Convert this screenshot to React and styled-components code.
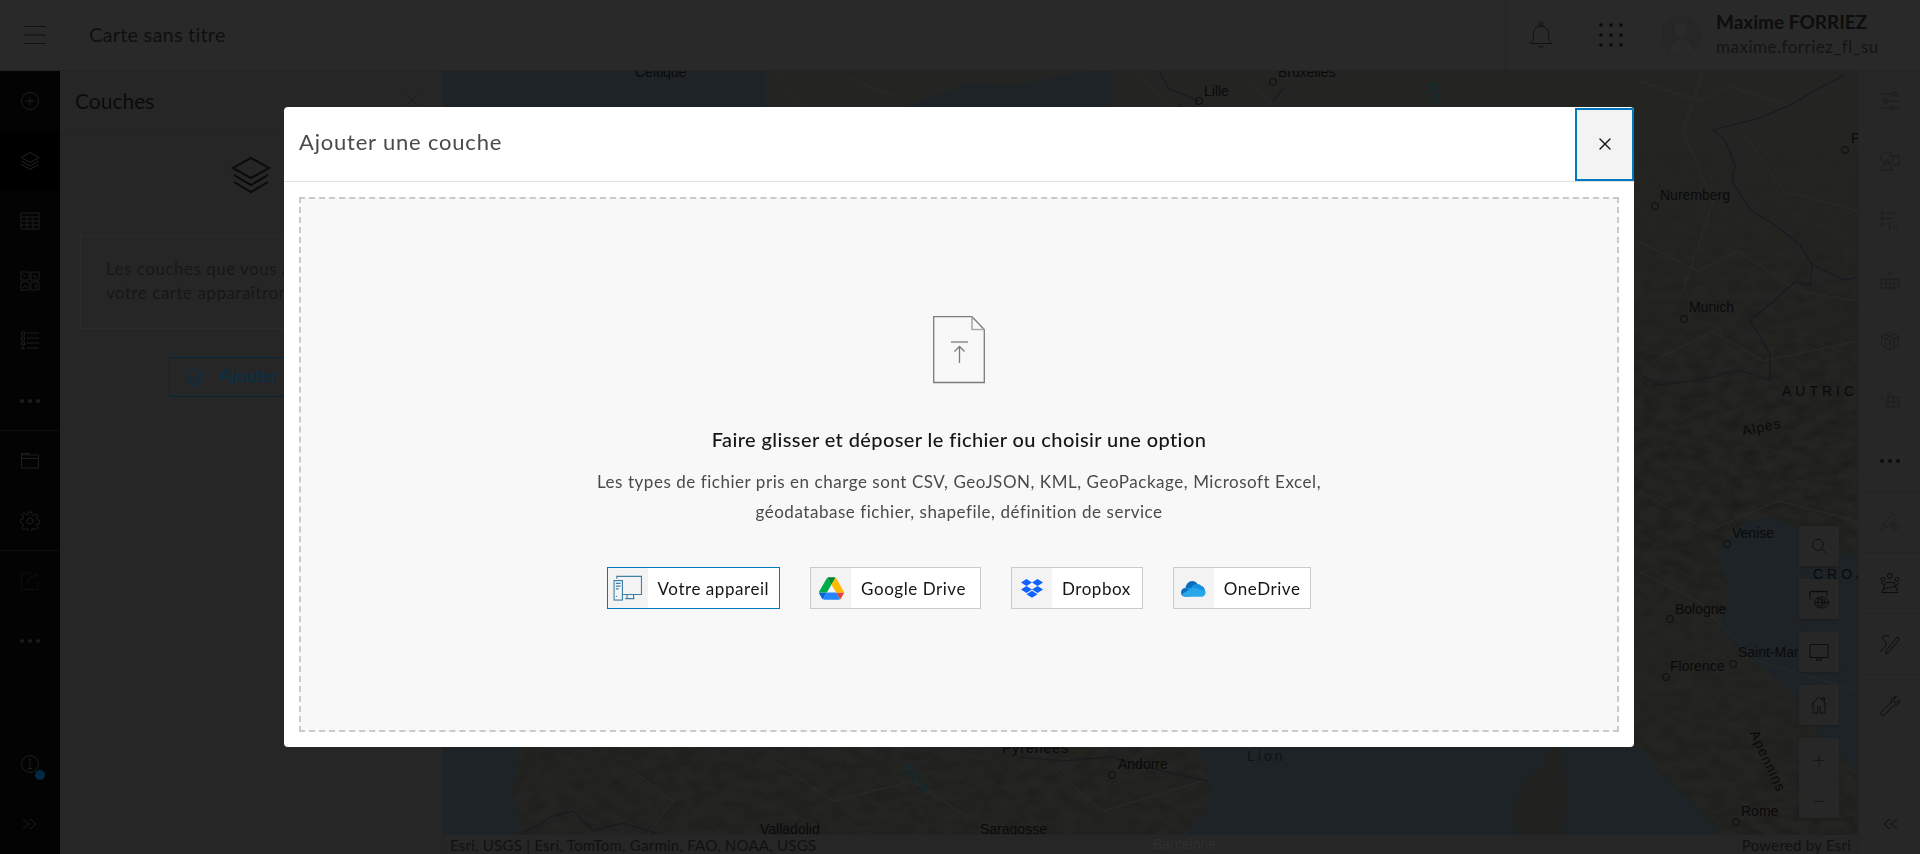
import React from "react";
import styled, { createGlobalStyle } from "styled-components";
import { X } from "lucide-react";

const FONT = `Lato, "Open Sans", "Liberation Sans", sans-serif`;

const GlobalStyle = createGlobalStyle`
  html, body, #root {
    margin: 0;
    height: 100%;
    background: #262626;
    font-family: ${FONT};
    overflow: hidden;
  }
  * { box-sizing: border-box; }
`;

/* ---------- icons ---------- */

const Svg = ({ size = 20, color = "#1e1e1e", sw = 1, children }) => (
  <svg width={size} height={size} viewBox="0 0 20 20" fill="none" stroke={color} strokeWidth={sw}>
    {children}
  </svg>
);

const LayersIcon = ({ size, color }) => (
  <Svg size={size} color={color}>
    <path d="M10 1.500 19 6.500 10 11.500 1 6.500Z" />
    <path d="M1.500 10 10 15 18.500 10" />
    <path d="M1.500 13.500 10 18.500 18.500 13.500" />
  </Svg>
);
const AddIcon = () => (
  <Svg>
    <circle cx="10" cy="10" r="8.500" />
    <path d="M10 5.500v9M5.500 10h9" />
  </Svg>
);
const TableIcon = () => (
  <Svg>
    <path d="M1 2h18v16H1zM1 6h18M1 10h18M1 14h18M7 6v12M13 6v12" />
  </Svg>
);
const GridIcon = () => (
  <Svg>
    <path d="M1 1h8v8H1zM11 1h8v8h-8zM1 11h8v8H1zM11 11h8v8h-8z" />
    <path d="M3 3l3 3M14 3v3h3M3 17l2-3 2 3M14 14h3v1h-1v3" />
  </Svg>
);
const ListIcon = () => (
  <Svg>
    <path d="M7 2h12M7 7h12M7 12h12M7 17h12" />
    <path d="M1.500 1h3v3h-3zM1.500 6h3v3h-3zM1.500 11h3v3h-3zM3 15.500 4.500 18h-3z" />
  </Svg>
);
const DotsIcon = ({ color = "#1e1e1e" }) => (
  <svg width="20" height="6" viewBox="0 0 20 6" fill={color}>
    <circle cx="2" cy="3" r="2" />
    <circle cx="10" cy="3" r="2" />
    <circle cx="18" cy="3" r="2" />
  </svg>
);
const FolderIcon = () => (
  <Svg>
    <path d="M1.500 4h17v13h-17zM1.500 7.500h17M1.500 4V2.500h8V4" />
  </Svg>
);
const GearIcon = () => (
  <Svg>
    <circle cx="10" cy="10" r="3" />
    <path d="M8.500 1h3l.5 2.600 1.700.7 2.200-1.500 2.100 2.100-1.500 2.200.7 1.700 2.600.5v3l-2.600.5-.7 1.700 1.500 2.200-2.100 2.100-2.200-1.500-1.700.7-.5 2.600h-3l-.5-2.600-1.700-.7-2.200 1.500-2.100-2.100 1.500-2.200-.7-1.700L.3 11.500v-3l2.600-.5.7-1.700-1.500-2.200 2.100-2.100 2.200 1.500L8 3.600Z" />
  </Svg>
);
const ShareIcon = () => (
  <Svg color="#0e0e0e">
    <path d="M10 2H1.500v16.500H18V10M8 12c0-5 4-8 10-8M15 1l3.500 3-3.500 3" />
  </Svg>
);
const InfoIcon = () => (
  <Svg>
    <circle cx="10" cy="10" r="8.500" />
    <path d="M10 8v6M8 14.500h4M8.500 8H10" />
    <circle cx="10" cy="5.500" r=".7" />
  </Svg>
);
const ChevronsIcon = ({ flip, color = "#1e1e1e" }) => (
  <svg width="16" height="12" viewBox="0 0 16 12" fill="none" stroke={color} transform={flip ? "scale(-1 1)" : undefined}>
    <path d="M1 1l6 5-6 5M8 1l6 5-6 5" />
  </svg>
);
const MenuIcon = () => (
  <svg width="24" height="20" viewBox="0 0 24 20" fill="none" stroke="#101010">
    <path d="M1 1.500h22M1 10h22M1 18.500h22" />
  </svg>
);
const BellIcon = () => (
  <svg width="24" height="28" viewBox="0 0 24 28" fill="none" stroke="#101010">
    <path d="M1 22.500c3-2.500 3.500-5 3.500-9 0-5 2.500-8.500 7.500-8.500s7.500 3.500 7.500 8.500c0 4 .5 6.500 3.500 9z" />
    <circle cx="12" cy="3" r="1.800" />
    <path d="M9.500 24.500c.5 2 4.500 2 5 0" />
  </svg>
);
const AppsIcon = () => (
  <svg width="24" height="24" viewBox="0 0 24 24" fill="#0b0b0b">
    {[2, 12, 22].flatMap((y) =>
      [2, 12, 22].map((x) => <circle key={`${x}-${y}`} cx={x} cy={y} r="1.800" />)
    )}
  </svg>
);
const AvatarIcon = () => (
  <svg width="40" height="40" viewBox="0 0 40 40">
    <circle cx="20" cy="20" r="20" fill="#262626" />
    <circle cx="20" cy="15" r="7" fill="#2a2a2a" />
    <path d="M8 36c2-10 8-12 12-12s10 2 12 12a20 20 0 0 1-24 0Z" fill="#2a2a2a" />
  </svg>
);
const SlidersIcon = () => (
  <Svg color="#1c1c1c">
    <path d="M1 3h18M1 10h18M1 17h18" />
    <rect x="13" y="1" width="3" height="4" fill="#272727" />
    <rect x="4" y="8" width="3" height="4" fill="#272727" />
    <rect x="10" y="15" width="3" height="4" fill="#272727" />
  </Svg>
);
const ShapesIcon = () => (
  <Svg color="#1c1c1c">
    <circle cx="7" cy="7" r="6" />
    <path d="M9 5h10v9h-5M7 8l6 11H1z" />
  </Svg>
);
const FxIcon = () => (
  <Svg color="#1c1c1c">
    <path d="M5 2h10M5 7h8M1 1h2.500v2.500H1zM1 6h2.500v2.500H1zM1 12h2.500v2.500H1zM7 13h3M8.500 19c1.500 0 1-8 3-8M13 14l5 5M18 14l-5 5" />
  </Svg>
);
const ChartIcon = () => (
  <Svg color="#1c1c1c">
    <path d="M1 8h18v9H1zM1 12.500h18M6 8v9M10 8v9M14 8v9M10 1v4M7 3l3-2 3 2M10 17v3" />
  </Svg>
);
const CubeIcon = () => (
  <Svg color="#1c1c1c">
    <path d="M10 1l8.500 4.500v9L10 19l-8.500-4.500v-9zM1.500 5.500 10 10l8.500-4.500M10 10v9M6 3.200l8.500 4.500v9M14 3.200 5.500 7.700v9" />
  </Svg>
);
const FilterTableIcon = () => (
  <Svg color="#1c1c1c">
    <path d="M8 6h11v10H8zM8 11h11M13 6v10M1 6l5 5v8M11 1 6 6" />
  </Svg>
);
const PenGearIcon = () => (
  <Svg color="#1e1e1e">
    <path d="M1 19 3 12 13 2l4 3-10 10zM3 12l4 3" />
    <circle cx="15" cy="14" r="3.500" />
    <circle cx="15" cy="14" r="1" />
  </Svg>
);
const PeopleIcon = () => (
  <Svg color="#0d0d0d">
    <circle cx="10" cy="3" r="2.500" />
    <circle cx="3" cy="6.500" r="2" />
    <circle cx="17" cy="6.500" r="2" />
    <path d="M6 9.500h8l4 10H2zM3.500 16l13-3M1 10l3 2M19 10l-3 2" />
  </Svg>
);
const SketchIcon = () => (
  <Svg color="#0d0d0d">
    <path d="M6 17 17 3l2.500 2L8 19l-2.500.7ZM9 2C6 1 2 2 2.500 4.500S8 7 6 11 .5 15 1 18" />
  </Svg>
);
const WrenchIcon = () => (
  <Svg color="#0d0d0d">
    <path d="M1 16.500 11.500 6C10.500 3 13 .5 16.500 1L13.500 4l.5 2.500L16.500 7l3-3c.5 3.500-2 6-5 5L4 19.500c-1.500 1-4-1.500-3-3Z" />
  </Svg>
);
const SearchIcon = () => (
  <Svg size={17} color="#0d0d0d">
    <circle cx="8" cy="8" r="6.500" />
    <path d="M12.800 12.800 19 19" />
  </Svg>
);
const TimeGlobeIcon = () => (
  <Svg color="#0d0d0d">
    <path d="M1 11V2.500h17V7M1 2.500V5M5 1v3M9 1v3M13 1v3M17 1v3" />
    <ellipse cx="12.500" cy="13.500" rx="7" ry="5.500" />
    <path d="M9 10h4v7H9zM13 11h3v4h-3zM6 13.500h13" />
  </Svg>
);
const MonitorIcon = () => (
  <Svg color="#0d0d0d">
    <path d="M1 2.500h18v13H1zM7 18h6M8 15.500V18M12 15.500V18" />
  </Svg>
);
const HomeIcon = () => (
  <Svg size={18} color="#0d0d0d">
    <path d="M1 10 10 1l9 9M3.500 8v11h5v-7h3v7h5V8M14 5V2h2v5" />
  </Svg>
);

const UploadIcon = () => (
  <svg width="52" height="68" viewBox="0 0 52 68" fill="none" stroke="#7b7b7b" strokeWidth="1.300">
    <path d="M.7.700H39L51.300 13.500V66.500H.7Z" />
    <path d="M39 .700V13.500H51.300" stroke="#a9a9a9" strokeWidth="1.600" />
    <path d="M18 26h17" />
    <path d="M26.500 47V30.500M21.500 35.500l5-5 5 5" />
  </svg>
);

const DeviceIcon = () => (
  <svg width="30" height="26" viewBox="0 0 32 28" fill="none" stroke="#3f7fa8" strokeWidth="1.200">
    <path d="M4 4V1.500h26.500V21H10" />
    <rect x="1" y="6" width="9" height="21" fill="#f3f3f3" />
    <path d="M3 9h5M3 12h5M3 15h3M3 23h1" />
    <path d="M15 21v4M22 21v4M13 25.500h10" />
  </svg>
);
const DriveIcon = () => (
  <svg width="25" height="23" viewBox="0 0 87.300 78">
    <path d="m6.600 66.850 3.850 6.650c.8 1.400 1.950 2.500 3.300 3.300l13.750-23.800h-27.500c0 1.550.4 3.100 1.200 4.500z" fill="#0066da" />
    <path d="m43.650 25-13.750-23.800c-1.350.8-2.500 1.900-3.300 3.300l-25.400 44a9.060 9.060 0 0 0-1.200 4.500h27.500z" fill="#00ac47" />
    <path d="m73.550 76.800c1.350-.8 2.500-1.900 3.300-3.300l1.600-2.750 7.650-13.250c.8-1.400 1.200-2.950 1.200-4.500h-27.500l5.850 11.500z" fill="#ea4335" />
    <path d="m43.650 25 13.750-23.800c-1.350-.8-2.900-1.200-4.500-1.200h-18.500c-1.600 0-3.150.45-4.500 1.200z" fill="#00832d" />
    <path d="m59.800 53h-32.300l-13.750 23.800c1.350.8 2.900 1.200 4.500 1.200h50.800c1.600 0 3.150-.45 4.500-1.200z" fill="#2684fc" />
    <path d="m73.400 26.500-12.700-22c-.8-1.400-1.950-2.500-3.300-3.300l-13.750 23.800 16.150 28h27.450c0-1.550-.4-3.100-1.200-4.500z" fill="#ffba00" />
  </svg>
);
const DropboxIcon = () => (
  <svg width="22" height="19" viewBox="0 0 22 19" fill="#0f62fe">
    <path d="M5.500 0 11 3.500 5.500 7 0 3.500ZM16.500 0 22 3.500 16.500 7 11 3.500ZM0 10.500 5.500 7 11 10.500 5.500 14ZM16.500 7 22 10.500 16.500 14 11 10.500ZM5.500 15.200 11 11.700l5.500 3.500L11 18.700Z" />
  </svg>
);
const OneDriveIcon = () => (
  <svg width="25" height="17" viewBox="0 0 25 17">
    <path d="M9.500 16.500 3 16.500C.5 16 0 13.500 0 12.500 0 10 2 8 4.500 8 5 4 8 1 11 1c2.500 0 4.500 1.300 5.500 3z" fill="#0f6cbd" />
    <path d="M16.500 4c-2-.5-5 .5-6 3.500L4.500 8l8 6.500L24 11c0-3-2-5-4-5.200-.5-1-2-1.800-3.500-1.800Z" fill="#1490df" />
    <path d="M4 16.800h16.500c2.500 0 4.500-2.500 4-5.500L12 7.500 1 14c.5 1.500 1.800 2.800 3 2.800Z" fill="#28a8ea" />
  </svg>
);

/* ---------- app shell ---------- */

const Page = styled.div`
  display: grid;
  grid-template-rows: 71px 1fr;
  width: 100%;
  height: 100%;
  background: #262626;
  color: #0d0d0d;
`;

const Header = styled.header`
  display: flex;
  align-items: center;
  background: #292929;
  border-bottom: 1px solid #232323;
`;

const MenuButton = styled.div`
  width: 70px;
  display: flex;
  justify-content: center;
`;

const MapTitle = styled.div`
  flex: 1;
  padding: 0 0 3px 19px;
  font-size: 20px;
  color: #0f0f0f;
  letter-spacing: 0.2px;
`;

const HeaderTools = styled.div`
  display: flex;
  align-items: center;
  height: 100%;
  width: 415px;
  border-left: 1px solid #232323;
`;

const HeaderTool = styled.div`
  width: 70px;
  display: flex;
  justify-content: center;
`;

const AvatarSlot = styled.div`
  width: 40px;
  height: 40px;
  margin: 0 15px;
`;

const UserBlock = styled.div`
  display: flex;
  flex-direction: column;
  gap: 3px;
  padding-bottom: 3px;
`;

const UserName = styled.div`
  font-size: 19px;
  font-weight: 700;
  color: #0d0d0d;
`;

const UserLogin = styled.div`
  font-size: 17px;
  color: #141414;
  letter-spacing: 0.5px;
`;

const Body = styled.div`
  display: grid;
  grid-template-columns: 60px 383px 1fr 62px;
  min-height: 0;
`;

const Rail = styled.nav`
  display: flex;
  flex-direction: column;
  background: #030303;
`;

const RailItem = styled.div`
  height: ${(p) => p.$h || 60}px;
  display: flex;
  align-items: center;
  justify-content: center;
  flex-shrink: 0;
  background: ${(p) => (p.$active ? "#000" : "transparent")};
  border-bottom: ${(p) => (p.$line ? `1px solid ${p.$lineColor || "#0f0f0f"}` : "none")};
  position: relative;
`;

const RailSpacer = styled.div`
  flex: 1;
`;

const Badge = styled.span`
  position: absolute;
  left: 35px;
  top: 36px;
  width: 10px;
  height: 10px;
  border-radius: 50%;
  background: #012a40;
`;

const Panel = styled.aside`
  display: flex;
  flex-direction: column;
  background: #262626;
  border-right: 1px solid #232323;
`;

const PanelHead = styled.div`
  height: 64px;
  flex-shrink: 0;
  display: flex;
  align-items: center;
  justify-content: space-between;
  padding: 0 20px 5px 15px;
  border-bottom: 1px solid #232323;
  font-size: 21px;
  color: #0b0b0b;
`;

const PanelBody = styled.div`
  display: flex;
  flex-direction: column;
  align-items: center;
  padding-top: 20px;
`;

const Notice = styled.div`
  width: 325px;
  height: 94px;
  margin: 40px 0 0 20px;
  padding: 21px 25px;
  align-self: flex-start;
  border: 1px solid #2c2c2c;
  font-size: 17px;
  line-height: 24px;
  color: #171717;
  white-space: nowrap;
  letter-spacing: 0.5px;
`;

const AddButton = styled.div`
  align-self: flex-start;
  margin: 28px 0 0 109px;
  width: 200px;
  height: 40px;
  padding: 0 0 0 14px;
  display: flex;
  align-items: center;
  gap: 15px;
  border: 1px solid #03263a;
  font-size: 18px;
  color: #05304a;
`;

const AddLabel = styled.span`
  padding-bottom: 4px;
`;

/* ---------- map ---------- */

const MapArea = styled.main`
  position: relative;
  overflow: hidden;
  background: #242424;
`;

const MapArt = styled.svg`
  position: absolute;
  inset: 0;
  width: 100%;
  height: 100%;
`;

const CityLabel = styled.span`
  position: absolute;
  left: ${(p) => p.$x}px;
  top: ${(p) => p.$y}px;
  height: 16px;
  line-height: 16px;
  font-family: "Liberation Sans", Arial, sans-serif;
  font-size: ${(p) => p.$size || 14}px;
  color: ${(p) => p.$color || "#0a0a0a"};
  white-space: nowrap;
  letter-spacing: ${(p) => p.$spacing || 0}px;
  transform: ${(p) => (p.$rot ? `rotate(${p.$rot}deg)` : "none")};
  transform-origin: left center;
`;

const CityDot = styled.i`
  position: absolute;
  left: ${(p) => p.$x - 4}px;
  top: ${(p) => p.$y - 4}px;
  width: 8px;
  height: 8px;
  border: 1px solid #0d0d0d;
  border-radius: 50%;
`;

const Attribution = styled.div`
  position: absolute;
  left: 0;
  right: 0;
  bottom: 0;
  height: 19px;
  padding: 0 7px;
  display: flex;
  justify-content: space-between;
  align-items: center;
  background: #262626;
  font-size: 15px;
  letter-spacing: 0.25px;
  color: #111;
`;

const BarLabel = styled.span`
  position: absolute;
  left: 710px;
  top: 1px;
  font-family: "Liberation Sans", Arial, sans-serif;
  font-size: 14px;
  letter-spacing: 0;
  color: #2f2f2f;
`;

const MapControls = styled.div`
  position: absolute;
  right: 19px;
  top: 455px;
  display: flex;
  flex-direction: column;
  gap: 13px;
`;

const ZoomGroup = styled.div`
  display: flex;
  flex-direction: column;
`;

const MapButton = styled.div`
  width: 40px;
  height: 40px;
  display: flex;
  align-items: center;
  justify-content: center;
  background: #272727;
  box-shadow: 0 1px 2px #1c1c1c;
  font-size: 24px;
  font-weight: 300;
  color: #151515;
`;

/* ---------- right rail ---------- */

const ToolRail = styled.nav`
  display: flex;
  flex-direction: column;
  background: #272727;
  border-left: 1px solid #232323;
`;

/* ---------- dialog ---------- */

const Scrim = styled.div`
  position: fixed;
  inset: 0;
  padding-right: 2px;
  display: flex;
  align-items: center;
  justify-content: center;
`;

const Dialog = styled.section`
  width: 1350px;
  height: 640px;
  display: flex;
  flex-direction: column;
  background: #fff;
  border-radius: 4px;
  overflow: hidden;
`;

const DialogHead = styled.div`
  height: 75px;
  flex-shrink: 0;
  display: flex;
  align-items: center;
  justify-content: space-between;
  border-bottom: 1px solid #e0e0e0;
`;

const DialogTitle = styled.h2`
  margin: 0 0 5px 15px;
  font-size: 22px;
  font-weight: 400;
  color: #4a4a4a;
  letter-spacing: 0.8px;
`;

const CloseButton = styled.button`
  width: 59px;
  height: 73px;
  padding: 0 0 2px;
  display: flex;
  align-items: center;
  justify-content: center;
  align-self: flex-start;
  margin-top: 1px;
  background: #f3f3f3;
  border: 2px solid #0079c1;
  color: #151515;
`;

const DialogBody = styled.div`
  flex: 1;
  padding: 15px;
  display: flex;
  min-height: 0;
`;

const DropZone = styled.div`
  flex: 1;
  display: flex;
  flex-direction: column;
  align-items: center;
  padding-top: 117px;
  background: #f8f8f8;
  border: 2px dashed #cacaca;
`;

const DropTitle = styled.div`
  margin-top: 43px;
  font-size: 20px;
  font-weight: 500;
  color: #151515;
  letter-spacing: 0.4px;
`;

const DropHint = styled.p`
  margin: 16px 0 0;
  width: 800px;
  text-align: center;
  font-size: 17px;
  line-height: 30px;
  color: #4a4a4a;
  letter-spacing: 0.54px;
`;

const SourceRow = styled.div`
  margin-top: 40px;
  display: flex;
  gap: 30px;
`;

const SourceButton = styled.div`
  height: 42px;
  display: flex;
  align-items: stretch;
  background: #fff;
  border: 1px solid ${(p) => (p.$focused ? "#0079c1" : "#cacaca")};
`;

const SourceIcon = styled.span`
  width: 40px;
  display: flex;
  align-items: center;
  justify-content: center;
  background: #f3f3f3;
`;

const SourceLabel = styled.span`
  padding: 0 ${(p) => p.$padRight || 10}px 0 10px;
  display: flex;
  align-items: center;
  font-size: 17px;
  letter-spacing: 0.55px;
  color: #151515;
`;

/* positions are map coordinates: screen x - 443, screen y - 71 */
const cities = [
  { name: "Lille", x: 761, y: 12, dot: [756, 30] },
  { name: "Bruxelles", x: 835, y: -7, dot: [830, 11] },
  { name: "Nuremberg", x: 1217, y: 116, dot: [1212, 135] },
  { name: "Munich", x: 1246, y: 228, dot: [1241, 248] },
  { name: "Venise", x: 1289, y: 454, dot: [1284, 473] },
  { name: "Bologne", x: 1232, y: 530, dot: [1227, 548] },
  { name: "Florence", x: 1227, y: 587, dot: [1223, 606] },
  { name: "Saint-Mar", x: 1295, y: 573, dot: [1290, 593] },
  { name: "Rome", x: 1298, y: 732, dot: [1293, 751] },
  { name: "Andorre", x: 675, y: 685, dot: [669, 704] },
  { name: "Valladolid", x: 317, y: 750 },
  { name: "Saragosse", x: 537, y: 750, dot: [532, 770] },
  { name: "P", x: 1408, y: 59, dot: [1402, 79] },
];

const leftTools = [
  { icon: <AddIcon /> },
  { icon: <LayersIcon size={20} color="#232323" />, active: true },
  { icon: <TableIcon /> },
  { icon: <GridIcon /> },
  { icon: <ListIcon /> },
  { icon: <DotsIcon />, line: true },
];

const rightTools = [
  <SlidersIcon />, <ShapesIcon />, <FxIcon />, <ChartIcon />, <CubeIcon />, <FilterTableIcon />,
];

const sources = [
  { label: "Votre appareil", icon: <DeviceIcon />, focused: true },
  { label: "Google Drive", icon: <DriveIcon />, padRight: 14 },
  { label: "Dropbox", icon: <DropboxIcon />, padRight: 11 },
  { label: "OneDrive", icon: <OneDriveIcon /> },
];

const MapDrawing = () => (
  <MapArt viewBox="0 0 1415 783" preserveAspectRatio="none">
    <defs>
      <filter id="relief" x="0" y="0" width="100%" height="100%" colorInterpolationFilters="sRGB">
        <feTurbulence type="fractalNoise" baseFrequency="0.06 0.1" numOctaves="4" seed="7" />
        <feColorMatrix values="0 0 0 0 0.09  0 0 0 0 0.095  0 0 0 0 0.08  1.1 0 0 0 -0.38" />
      </filter>
      <filter id="faint" x="0" y="0" width="100%" height="100%" colorInterpolationFilters="sRGB">
        <feTurbulence type="fractalNoise" baseFrequency="0.02" numOctaves="3" seed="3" />
        <feColorMatrix values="0 0 0 0 0.14  0 0 0 0 0.145  0 0 0 0 0.12  0.8 0 0 0 -0.2" />
      </filter>
      <linearGradient id="reliefFade" x1="0" y1="0" x2="0" y2="1">
        <stop offset="0.1" stopColor="#000" />
        <stop offset="0.42" stopColor="#fff" />
        <stop offset="0.62" stopColor="#fff" />
        <stop offset="0.72" stopColor="#666" />
        <stop offset="1" stopColor="#fff" />
      </linearGradient>
      <mask id="reliefMask" maskUnits="userSpaceOnUse" x="1190" y="0" width="225" height="783">
        <rect x="1190" y="0" width="225" height="783" fill="url(#reliefFade)" />
      </mask>
    </defs>
    <rect width="1415" height="783" fill="#242423" />
    <rect width="1415" height="783" filter="url(#faint)" />
    <g mask="url(#reliefMask)">
      <rect x="1190" y="0" width="225" height="783" filter="url(#relief)" />
    </g>
    <rect x="0" y="676" width="1190" height="107" filter="url(#relief)" opacity="0.7" />

    {/* sea */}
    <g fill="#1d2326">
      <path d="M0 0H322V36H0Z" />
      <path d="M464 36 525 12 570 14 632 2 660 0H670V36Z" />
      <path d="M0 676H77L70 720 78 764V783H0Z" />
      <path d="M755 676 768 715 764 740 737 764V783H1300L1280 764 1247 730 1215 700 1197 676Z" />
      <path d="M1274 484 1300 452 1330 446 1360 460 1380 490 1415 480V700L1382 669 1347 619 1297 579 1277 559 1287 519Z" />
    </g>
    <path d="M1108 676 1100 695 1080 710 1070 740 1075 764H1120L1125 720 1120 690 1115 676Z" fill="#21221f" />

    {/* roads and regions */}
    <g fill="none" stroke="#2b2b2a" strokeWidth="1">
      <path d="M1195 170l60 30 40-20 60 40 60 10M1210 290l60-30 50 30 95-20M1195 420l70 40 70-30 80 20M1195 500l60 30 60 60 100 30M1300 60l40 60 75 20" />
      <path d="M1196 10l60 20 30-15 60 20M1260 0l-20 60 30 70-30 90" />
      <path d="M330 690l60 40 80-20 60 40M600 690l60 50 100-30M190 700l40 30-30 40" />
      <path d="M330 0l30 36M400 5l50 20M690 0l40 36M800 0l30 36" />
    </g>
    {/* borders */}
    <g fill="none" stroke="#1a1922" strokeWidth="1.200">
      <path d="M1402 4 1380 15 1347 34 1317 47 1270 59 1282 69 1292 94 1289 109 1307 139 1332 154 1357 174 1369 194 1367 214 1352 211M1369 194 1402 209 1415 206M1352 211 1332 229 1307 249 1322 274 1327 284 1327 309 1297 299 1257 309 1217 314 1197 304" />
      <path d="M577 686 620 690 667 686 720 700 764 710" />
      <path d="M77 764 110 745 130 740 150 760 180 752 212 762" />
      <path d="M756 30l-30-12-10-18M745 40l-10 -6M840 18l-10 12" />
    </g>
  </MapArt>
);

export default function App() {
  return (
    <>
      <GlobalStyle />
      <Page>
        <Header>
          <MenuButton><MenuIcon /></MenuButton>
          <MapTitle>Carte sans titre</MapTitle>
          <HeaderTools>
            <HeaderTool><BellIcon /></HeaderTool>
            <HeaderTool><AppsIcon /></HeaderTool>
            <AvatarSlot><AvatarIcon /></AvatarSlot>
            <UserBlock>
              <UserName>Maxime FORRIEZ</UserName>
              <UserLogin>maxime.forriez_fl_su</UserLogin>
            </UserBlock>
          </HeaderTools>
        </Header>
        <Body>
          <Rail>
            {leftTools.map((t, i) => (
              <RailItem key={i} $active={t.active} $line={t.line}>{t.icon}</RailItem>
            ))}
            <RailItem><FolderIcon /></RailItem>
            <RailItem $line><GearIcon /></RailItem>
            <RailItem><ShareIcon /></RailItem>
            <RailItem><DotsIcon color="#1a1a1a" /></RailItem>
            <RailSpacer />
            <RailItem><InfoIcon /><Badge /></RailItem>
            <RailItem><ChevronsIcon /></RailItem>
          </Rail>
          <Panel>
            <PanelHead>
              Couches
              <X size={20} color="#1a1a1a" strokeWidth={1.100} />
            </PanelHead>
            <PanelBody>
              <LayersIcon size={40} color="#0a0a0a" />
              <Notice>
                Les couches que vous ajoutez à<br />votre carte apparaîtront ici.
              </Notice>
              <AddButton>
                <LayersIcon size={20} color="#05304a" />
                <AddLabel>Ajouter</AddLabel>
              </AddButton>
            </PanelBody>
          </Panel>
          <MapArea>
            <MapDrawing />
            {cities.map((c) => (
              <React.Fragment key={c.name}>
                {c.dot && <CityDot $x={c.dot[0]} $y={c.dot[1]} />}
                <CityLabel $x={c.x} $y={c.y}>{c.name}</CityLabel>
              </React.Fragment>
            ))}
            <CityLabel $x={192} $y={-7}>Celtique</CityLabel>
            <CityLabel $x={559} $y={669} $spacing={1}>Pyrénées</CityLabel>
            <CityLabel $x={804} $y={677} $spacing={3} $color="#121212">Lion</CityLabel>
            <CityLabel $x={988} $y={4} $spacing={1} $rot={70} $color="#0d2c33">Rhin</CityLabel>
            <CityLabel $x={462} $y={688} $spacing={1} $rot={45} $color="#0d2c33">Èbre</CityLabel>
            <CityLabel $x={1339} $y={312} $spacing={4}>AUTRIC</CityLabel>
            <CityLabel $x={1370} $y={495} $spacing={4}>CROA</CityLabel>
            <CityLabel $x={1299} $y={352} $spacing={1} $rot={-12}>Alpes</CityLabel>
            <CityLabel $x={1311} $y={652} $spacing={1} $rot={65}>Apennins</CityLabel>
            <MapControls>
              <MapButton><SearchIcon /></MapButton>
              <MapButton><TimeGlobeIcon /></MapButton>
              <MapButton><MonitorIcon /></MapButton>
              <MapButton><HomeIcon /></MapButton>
              <ZoomGroup>
                <MapButton>+</MapButton>
                <MapButton>–</MapButton>
              </ZoomGroup>
            </MapControls>
            <Attribution>
              <span>Esri, USGS | Esri, TomTom, Garmin, FAO, NOAA, USGS</span>
              <BarLabel>Barcelone</BarLabel>
              <span>Powered by Esri</span>
            </Attribution>
          </MapArea>
          <ToolRail>
            {rightTools.map((icon, i) => (
              <RailItem key={i}>{icon}</RailItem>
            ))}
            <RailItem $h={61} $line $lineColor="#232323"><DotsIcon color="#0d0d0d" /></RailItem>
            <RailItem $h={61} $line $lineColor="#232323"><PenGearIcon /></RailItem>
            <RailItem $h={61} $line $lineColor="#232323"><PeopleIcon /></RailItem>
            <RailItem $h={61} $line $lineColor="#232323"><SketchIcon /></RailItem>
            <RailItem $h={61}><WrenchIcon /></RailItem>
            <RailSpacer />
            <RailItem><ChevronsIcon flip color="#0d0d0d" /></RailItem>
          </ToolRail>
        </Body>
        <Scrim>
          <Dialog>
            <DialogHead>
              <DialogTitle>Ajouter une couche</DialogTitle>
              <CloseButton><X size={20} strokeWidth={1.600} /></CloseButton>
            </DialogHead>
            <DialogBody>
              <DropZone>
                <UploadIcon />
                <DropTitle>Faire glisser et déposer le fichier ou choisir une option</DropTitle>
                <DropHint>
                  Les types de fichier pris en charge sont CSV, GeoJSON, KML, GeoPackage, Microsoft Excel,<br />
                  géodatabase fichier, shapefile, définition de service
                </DropHint>
                <SourceRow>
                  {sources.map((s) => (
                    <SourceButton key={s.label} $focused={s.focused}>
                      <SourceIcon>{s.icon}</SourceIcon>
                      <SourceLabel $padRight={s.padRight}>{s.label}</SourceLabel>
                    </SourceButton>
                  ))}
                </SourceRow>
              </DropZone>
            </DialogBody>
          </Dialog>
        </Scrim>
      </Page>
    </>
  );
}
